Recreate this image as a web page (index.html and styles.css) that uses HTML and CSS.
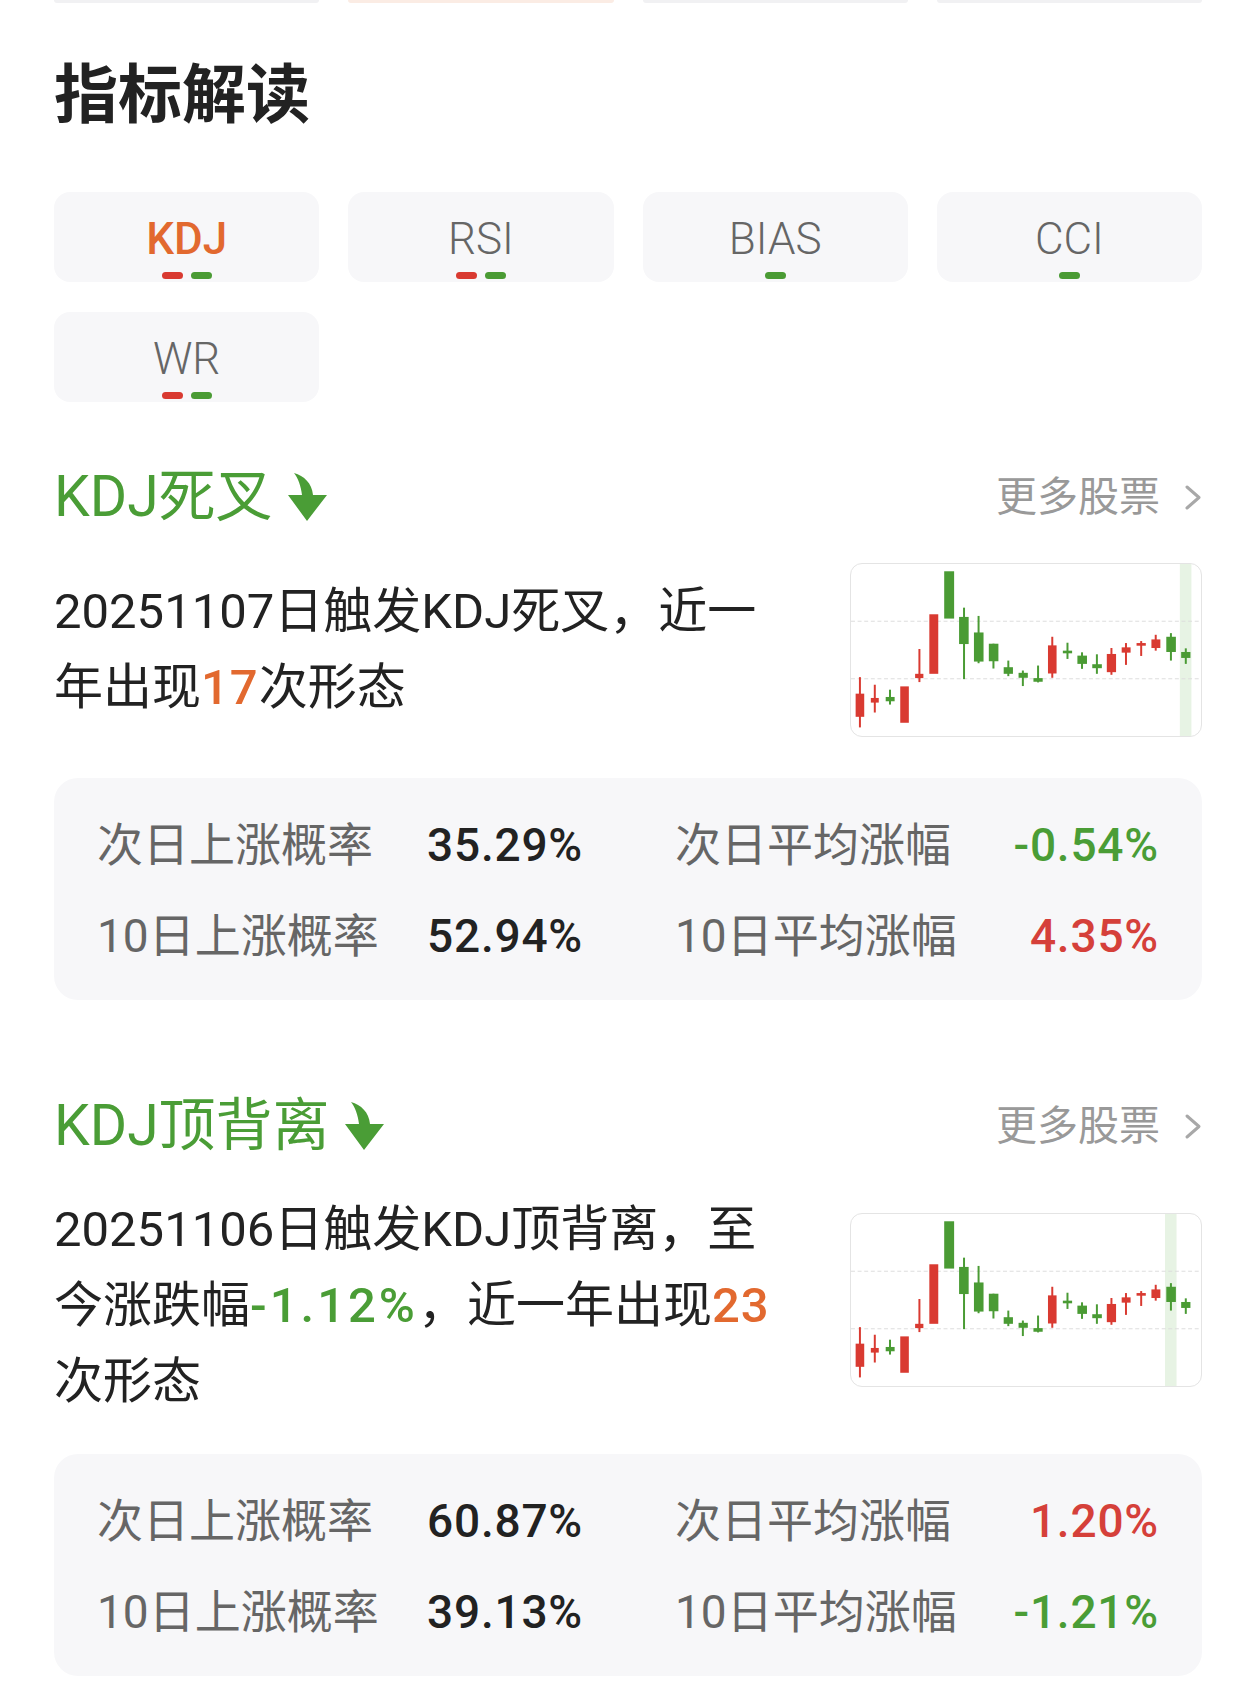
FILE: index.html
```html
<!DOCTYPE html>
<html lang="zh-CN">
<head>
<meta charset="utf-8">
<title>指标解读</title>
<link rel="stylesheet" href="styles.css">
</head>
<body>
<div class="page">
  <div class="top-remnant">
    <div></div><div class="peach"></div><div></div><div></div>
  </div>

  <h1 class="title">指标解读</h1>

  <div class="tabs">
    <div class="tab active"><span class="tab-label">KDJ</span><span class="pills"><i class="pill red"></i><i class="pill green"></i></span></div>
    <div class="tab"><span class="tab-label">RSI</span><span class="pills"><i class="pill red"></i><i class="pill green"></i></span></div>
    <div class="tab"><span class="tab-label">BIAS</span><span class="pills"><i class="pill green"></i></span></div>
    <div class="tab"><span class="tab-label">CCI</span><span class="pills"><i class="pill green"></i></span></div>
    <div class="tab"><span class="tab-label">WR</span><span class="pills"><i class="pill red"></i><i class="pill green"></i></span></div>
  </div>

  <section class="signal first">
    <div class="signal-head">
      <div class="signal-name">
        <span>KDJ死叉</span>
        <svg class="arrow" viewBox="8 6 40 50" width="40" height="50"><path d="M14 7 C24 10 32 17 33 29 L47 29 L27 55 L8 29 L22 29 C21 20 18 12 14 7 Z"/></svg>
      </div>
      <div class="more">更多股票<svg class="chev" viewBox="0 0 18 27" width="18" height="27"><path d="M3 3 L15 13.5 L3 24"/></svg></div>
    </div>
    <div class="signal-body">
      <p class="desc"><span>20251107日触发KDJ死叉，近一</span><span>年出现</span><b class="hl">17</b><span>次形态</span></p>
      <div class="chart">
        <svg viewBox="0 0 1059 520" preserveAspectRatio="none">
          <rect class="band" x="995" y="0" width="35" height="520"/>
          <line class="grid" x1="0" y1="173" x2="1059" y2="173"/>
          <line class="grid" x1="0" y1="347" x2="1059" y2="347"/>
          <rect class="r" x="24" y="342" width="6" height="152"/><rect class="r" x="14" y="392" width="26" height="70"/>
          <rect class="r" x="69" y="365" width="6" height="84"/><rect class="r" x="60" y="405" width="24" height="14"/>
          <rect class="g" x="115" y="380" width="6" height="45"/><rect class="g" x="105" y="402" width="27" height="13"/>
          <rect class="r" x="149" y="370" width="26" height="110"/>
          <rect class="r" x="204" y="257" width="6" height="100"/><rect class="r" x="194" y="332" width="25" height="13"/>
          <rect class="r" x="237" y="152" width="27" height="180"/>
          <rect class="g" x="282" y="22" width="30" height="143"/>
          <rect class="g" x="339" y="132" width="6" height="216"/><rect class="g" x="327" y="160" width="29" height="82"/>
          <rect class="g" x="383" y="157" width="6" height="143"/><rect class="g" x="372" y="207" width="29" height="88"/>
          <rect class="g" x="428" y="241" width="6" height="75"/><rect class="g" x="417" y="241" width="29" height="53"/>
          <rect class="g" x="473" y="292" width="6" height="47"/><rect class="g" x="462" y="312" width="28" height="20"/>
          <rect class="g" x="517" y="322" width="6" height="47"/><rect class="g" x="507" y="329" width="28" height="15"/>
          <rect class="g" x="563" y="307" width="6" height="51"/><rect class="g" x="552" y="345" width="28" height="11"/>
          <rect class="r" x="606" y="220" width="6" height="124"/><rect class="r" x="596" y="246" width="26" height="85"/>
          <rect class="g" x="652" y="238" width="6" height="49"/><rect class="g" x="641" y="262" width="28" height="8"/>
          <rect class="g" x="696" y="267" width="6" height="50"/><rect class="g" x="685" y="277" width="29" height="25"/>
          <rect class="g" x="741" y="273" width="6" height="59"/><rect class="g" x="730" y="303" width="29" height="12"/>
          <rect class="r" x="785" y="254" width="6" height="81"/><rect class="r" x="774" y="272" width="28" height="55"/>
          <rect class="r" x="829" y="239" width="6" height="66"/><rect class="r" x="819" y="252" width="27" height="16"/>
          <rect class="r" x="875" y="233" width="6" height="45"/><rect class="r" x="864" y="239" width="28" height="8"/>
          <rect class="r" x="919" y="214" width="6" height="48"/><rect class="r" x="909" y="228" width="27" height="26"/>
          <rect class="g" x="965" y="209" width="6" height="83"/><rect class="g" x="954" y="220" width="29" height="46"/>
          <rect class="g" x="1010" y="255" width="6" height="47"/><rect class="g" x="999" y="266" width="28" height="18"/>
        </svg>
      </div>
    </div>
    <div class="stats">
      <span class="label">次日上涨概率</span><span class="value">35.29%</span>
      <span class="label">次日平均涨幅</span><span class="value end down">-0.54%</span>
      <span class="label">10日上涨概率</span><span class="value">52.94%</span>
      <span class="label">10日平均涨幅</span><span class="value end up">4.35%</span>
    </div>
  </section>

  <section class="signal second">
    <div class="signal-head">
      <div class="signal-name">
        <span>KDJ顶背离</span>
        <svg class="arrow" viewBox="8 6 40 50" width="40" height="50"><path d="M14 7 C24 10 32 17 33 29 L47 29 L27 55 L8 29 L22 29 C21 20 18 12 14 7 Z"/></svg>
      </div>
      <div class="more">更多股票<svg class="chev" viewBox="0 0 18 27" width="18" height="27"><path d="M3 3 L15 13.5 L3 24"/></svg></div>
    </div>
    <div class="signal-body">
      <p class="desc"><span>20251106日触发KDJ顶背离，至</span><span>今涨跌幅</span><b class="neg">-1.12%</b><span>，近一年出现</span><b class="hl">23</b><span>次形态</span></p>
      <div class="chart">
        <svg viewBox="0 0 1059 520" preserveAspectRatio="none">
          <rect class="band" x="950" y="0" width="35" height="520"/>
          <line class="grid" x1="0" y1="173" x2="1059" y2="173"/>
          <line class="grid" x1="0" y1="347" x2="1059" y2="347"/>
          <rect class="r" x="24" y="342" width="6" height="152"/><rect class="r" x="14" y="392" width="26" height="70"/>
          <rect class="r" x="69" y="365" width="6" height="84"/><rect class="r" x="60" y="405" width="24" height="14"/>
          <rect class="g" x="115" y="380" width="6" height="45"/><rect class="g" x="105" y="402" width="27" height="13"/>
          <rect class="r" x="149" y="370" width="26" height="110"/>
          <rect class="r" x="204" y="257" width="6" height="100"/><rect class="r" x="194" y="332" width="25" height="13"/>
          <rect class="r" x="237" y="152" width="27" height="180"/>
          <rect class="g" x="282" y="22" width="30" height="143"/>
          <rect class="g" x="339" y="132" width="6" height="216"/><rect class="g" x="327" y="160" width="29" height="82"/>
          <rect class="g" x="383" y="157" width="6" height="143"/><rect class="g" x="372" y="207" width="29" height="88"/>
          <rect class="g" x="428" y="241" width="6" height="75"/><rect class="g" x="417" y="241" width="29" height="53"/>
          <rect class="g" x="473" y="292" width="6" height="47"/><rect class="g" x="462" y="312" width="28" height="20"/>
          <rect class="g" x="517" y="322" width="6" height="47"/><rect class="g" x="507" y="329" width="28" height="15"/>
          <rect class="g" x="563" y="307" width="6" height="51"/><rect class="g" x="552" y="345" width="28" height="11"/>
          <rect class="r" x="606" y="220" width="6" height="124"/><rect class="r" x="596" y="246" width="26" height="85"/>
          <rect class="g" x="652" y="238" width="6" height="49"/><rect class="g" x="641" y="262" width="28" height="8"/>
          <rect class="g" x="696" y="267" width="6" height="50"/><rect class="g" x="685" y="277" width="29" height="25"/>
          <rect class="g" x="741" y="273" width="6" height="59"/><rect class="g" x="730" y="303" width="29" height="12"/>
          <rect class="r" x="785" y="254" width="6" height="81"/><rect class="r" x="774" y="272" width="28" height="55"/>
          <rect class="r" x="829" y="239" width="6" height="66"/><rect class="r" x="819" y="252" width="27" height="16"/>
          <rect class="r" x="875" y="233" width="6" height="45"/><rect class="r" x="864" y="239" width="28" height="8"/>
          <rect class="r" x="919" y="214" width="6" height="48"/><rect class="r" x="909" y="228" width="27" height="26"/>
          <rect class="g" x="965" y="209" width="6" height="83"/><rect class="g" x="954" y="220" width="29" height="46"/>
          <rect class="g" x="1010" y="255" width="6" height="47"/><rect class="g" x="999" y="266" width="28" height="18"/>
        </svg>
      </div>
    </div>
    <div class="stats">
      <span class="label">次日上涨概率</span><span class="value">60.87%</span>
      <span class="label">次日平均涨幅</span><span class="value end up">1.20%</span>
      <span class="label">10日上涨概率</span><span class="value">39.13%</span>
      <span class="label">10日平均涨幅</span><span class="value end down">-1.21%</span>
    </div>
  </section>
</div>
</body>
</html>
```
FILE: styles.css
```css
* { box-sizing: border-box; }

body {
  margin: 0;
  background: #ffffff;
  font-family: Roboto, "Noto Sans CJK SC", sans-serif;
  color: #222222;
}

.page {
  width: 1256px;
  padding: 0 54px;
}

/* remnants of the cards above */
.top-remnant {
  display: grid;
  grid-template-columns: repeat(4, 1fr);
  column-gap: 29px;
  height: 3px;
}
.top-remnant div {
  background: #f1f1f3;
  border-radius: 0 0 14px 14px;
}
.top-remnant .peach { background: #fbece4; }

.title {
  margin: 61px 0 0;
  font-size: 64px;
  line-height: 64px;
  font-weight: 700;
  color: #222222;
}

/* indicator tabs */
.tabs {
  margin-top: 64px;
  display: grid;
  grid-template-columns: repeat(4, 1fr);
  column-gap: 29px;
  row-gap: 30px;
}
.tab {
  height: 90px;
  background: #f7f7f9;
  border-radius: 16px;
  display: flex;
  flex-direction: column;
  align-items: center;
  padding-top: 25px;
}
.tab-label {
  font-size: 44px;
  line-height: 44px;
  font-weight: 300;
  color: #666666;
}
.tab.active .tab-label {
  color: #e2692f;
  font-weight: 500;
}
.pills {
  margin-top: 11px;
  display: flex;
  gap: 8px;
}
.pill {
  display: block;
  width: 21px;
  height: 7px;
  border-radius: 4px;
}
.pill.red { background: #d93a31; }
.pill.green { background: #4a9b34; }

/* signal sections */
.signal.first { margin-top: 65px; }
.signal.second { margin-top: 96px; }

.signal-head {
  height: 60px;
  display: flex;
  align-items: center;
  justify-content: space-between;
}
.signal-name {
  display: flex;
  align-items: center;
  font-size: 57px;
  line-height: 60px;
  color: #4a9d36;
}
.arrow {
  margin-left: 15px;
  fill: #4a9d36;
}
.more {
  display: flex;
  align-items: center;
  font-size: 41px;
  line-height: 60px;
  color: #999999;
}
.chev {
  margin-left: 24px;
  fill: none;
  stroke: #a8a8a8;
  stroke-width: 3;
  stroke-linecap: round;
  stroke-linejoin: round;
}

.signal-body {
  margin-top: 36px;
  display: flex;
  align-items: center;
  justify-content: space-between;
}
.desc {
  margin: 0;
  width: 730px;
  font-size: 49px;
  line-height: 76px;
  color: #222222;
}
.desc b { font-weight: 500; }
.desc .hl { color: #e2692f; letter-spacing: 1px; }
.desc .neg { color: #4a9d36; letter-spacing: 3px; }

.chart {
  width: 352px;
  height: 174px;
  border: 1px solid #e4e4e4;
  border-radius: 12px;
  overflow: hidden;
  flex: none;
}
.signal.second .chart { margin-bottom: 12px; }
.chart svg {
  display: block;
  width: 100%;
  height: 100%;
}
.chart .band { fill: #e7f3e4; }
.chart .grid {
  stroke: #dddddd;
  stroke-width: 3;
  stroke-dasharray: 12 8;
}
.chart .r { fill: #d93a31; }
.chart .g { fill: #4a9b34; }

/* statistics */
.stats {
  background: #f7f7f9;
  border-radius: 24px;
  padding: 22px 43px 18px;
  display: grid;
  grid-template-columns: 330px 248px 1fr auto;
  font-size: 46px;
  line-height: 91px;
}
.signal.first .stats { margin-top: 41px; }
.signal.second .stats { margin-top: 34px; }
.stats .label { color: #666666; }
.stats .value { color: #222222; font-weight: 500; letter-spacing: 0.8px; }
.stats .end { text-align: right; }
.stats .up { color: #d5403a; }
.stats .down { color: #4a9d36; }
```
